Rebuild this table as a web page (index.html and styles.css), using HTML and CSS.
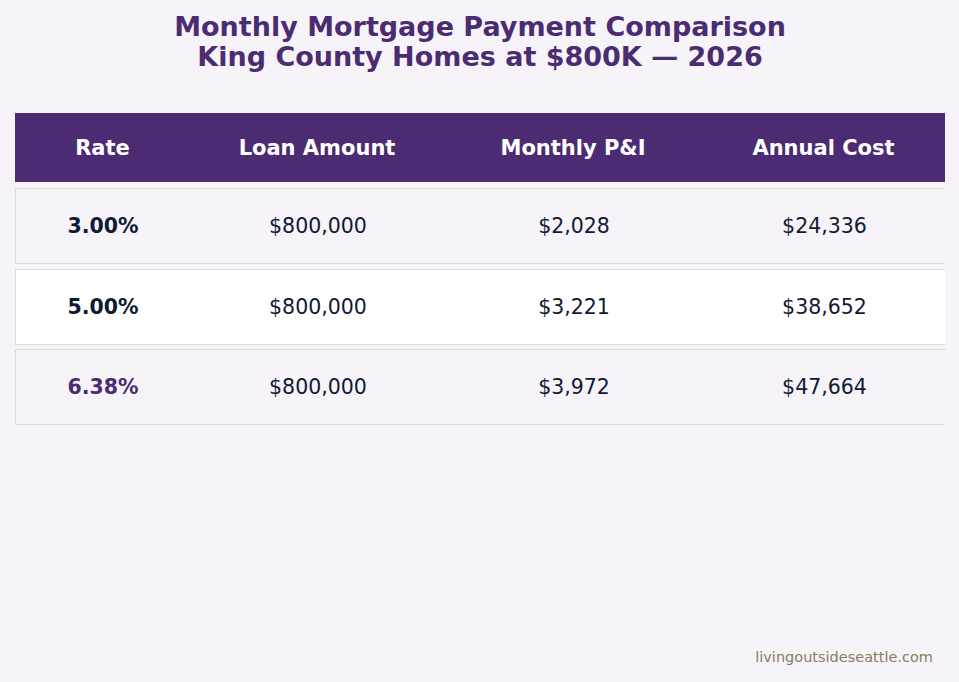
FILE: index.html
```html
<!DOCTYPE html>
<html lang="en">
<head>
<meta charset="utf-8">
<title>Monthly Mortgage Payment Comparison</title>
<link rel="stylesheet" href="styles.css">
</head>
<body>
<main class="page">
  <h1 class="title">Monthly Mortgage Payment Comparison<br>King County Homes at $800K — 2026</h1>
  <div class="table">
    <div class="row head">
      <div class="cell">Rate</div>
      <div class="cell">Loan Amount</div>
      <div class="cell">Monthly P&amp;I</div>
      <div class="cell">Annual Cost</div>
    </div>
    <div class="row body alt first">
      <div class="cell rate">3.00%</div>
      <div class="cell">$800,000</div>
      <div class="cell">$2,028</div>
      <div class="cell">$24,336</div>
    </div>
    <div class="row body white second">
      <div class="cell rate">5.00%</div>
      <div class="cell">$800,000</div>
      <div class="cell">$3,221</div>
      <div class="cell">$38,652</div>
    </div>
    <div class="row body alt third">
      <div class="cell rate current">6.38%</div>
      <div class="cell">$800,000</div>
      <div class="cell">$3,972</div>
      <div class="cell">$47,664</div>
    </div>
  </div>
  <footer class="credit">livingoutsideseattle.com</footer>
</main>
</body>
</html>
```
FILE: styles.css
```css
html, body {
  margin: 0;
  padding: 0;
  background: #f6f4f9;
}
body {
  font-family: "DejaVu Sans", sans-serif;
  width: 959px;
  height: 682px;
  overflow: hidden;
}
.page {
  position: relative;
  height: 682px;
  display: flex;
  flex-direction: column;
  padding: 12px 14px 0 15px;
  box-sizing: border-box;
}
.title {
  margin: 0;
  text-align: center;
  font-size: 27px;
  line-height: 30px;
  font-weight: bold;
  color: #4b2c72;
}
.table {
  margin-top: 41px;
  width: 930px;
  display: flex;
  flex-direction: column;
}
.row {
  display: grid;
  grid-template-columns: 175px 254px 258px 243px;
  align-items: center;
}
.cell {
  text-align: center;
}
.head {
  background: #4b2c72;
  height: 69px;
  color: #ffffff;
  font-weight: bold;
  font-size: 21px;
}
.body {
  height: 76px;
  box-sizing: border-box;
  border-top: 1px solid #dcdae0;
  border-bottom: 1px solid #dcdae0;
  border-left: 1px solid #dcdae0;
  font-size: 20.5px;
  color: #111a33;
}
.body .cell:first-child { margin-left: -1px; }
.first { margin-top: 6px; }
.second { margin-top: 5px; }
.third { margin-top: 4px; }
.alt { background: #f6f4f9; }
.white { background: #ffffff; }
.rate { font-weight: bold; }
.current { color: #4b2c72; }
.credit {
  position: absolute;
  right: 26px;
  top: 649px;
  font-size: 14.5px;
  color: #8b7a5e;
}
```
